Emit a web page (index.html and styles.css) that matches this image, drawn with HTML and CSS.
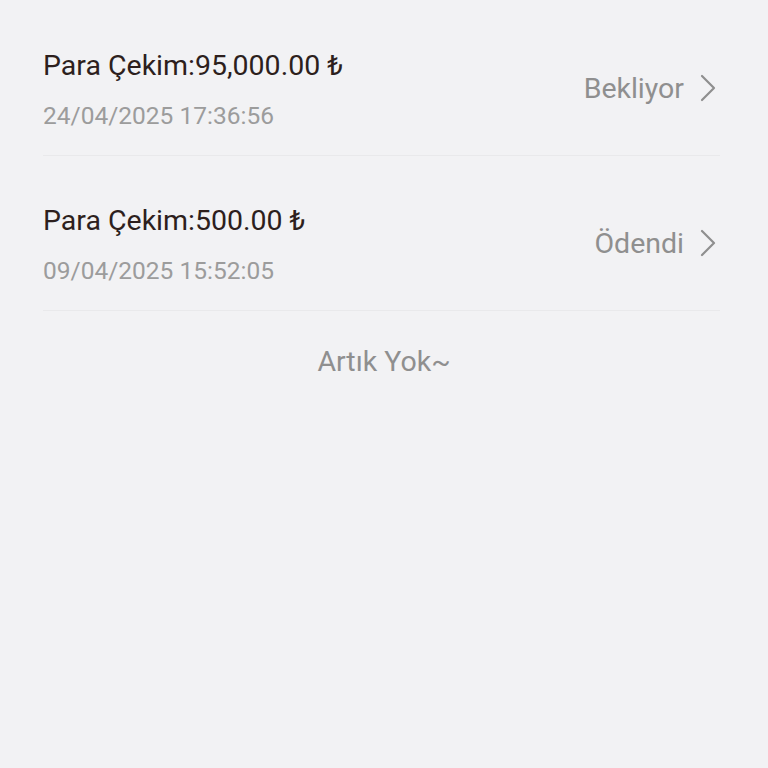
FILE: index.html
```html
<!DOCTYPE html>
<html lang="tr">
<head>
<meta charset="utf-8">
<link rel="stylesheet" href="styles.css">
</head>
<body>
<div class="list">
  <div class="row">
    <div class="info">
      <div class="title">Para Çekim:95,000.00 ₺</div>
      <div class="date">24/04/2025 17:36:56</div>
    </div>
    <div class="status">
      <span>Bekliyor</span>
      <svg class="chev" width="16" height="28" viewBox="0 0 16 28"><path d="M2 2 L14 14 L2 26" fill="none" stroke="#8f8f8f" stroke-width="2.2" stroke-linecap="round" stroke-linejoin="round"/></svg>
    </div>
  </div>
  <div class="row">
    <div class="info">
      <div class="title">Para Çekim:500.00 ₺</div>
      <div class="date">09/04/2025 15:52:05</div>
    </div>
    <div class="status">
      <span>Ödendi</span>
      <svg class="chev" width="16" height="28" viewBox="0 0 16 28"><path d="M2 2 L14 14 L2 26" fill="none" stroke="#8f8f8f" stroke-width="2.2" stroke-linecap="round" stroke-linejoin="round"/></svg>
    </div>
  </div>
</div>
<div class="end">Artık Yok~</div>
</body>
</html>
```
FILE: styles.css
```css
html, body {
  margin: 0;
  padding: 0;
  background: #f2f2f4;
  height: 100%;
}
body {
  font-family: Roboto, "Liberation Sans", sans-serif;
}
.list {
  padding: 1px 48px 0 43px;
}
.row {
  display: flex;
  align-items: center;
  justify-content: space-between;
  padding: 47px 0 23px;
  border-bottom: 1px solid #e9e9eb;
}
.info {
  display: flex;
  flex-direction: column;
  gap: 16px;
}
.title {
  font-size: 28.5px;
  line-height: 36px;
  color: #2d1f1d;
}
.date {
  font-size: 24.5px;
  line-height: 32px;
  color: #9c9c9c;
}
.status {
  display: flex;
  align-items: center;
  gap: 16px;
  font-size: 28.5px;
  color: #8f8f8f;
  margin-top: -4px;
  margin-right: 4px;
}
.chev {
  display: block;
}
.end {
  text-align: center;
  font-size: 28.5px;
  line-height: 36px;
  color: #8f8f8f;
  padding-top: 33px;
}
```
